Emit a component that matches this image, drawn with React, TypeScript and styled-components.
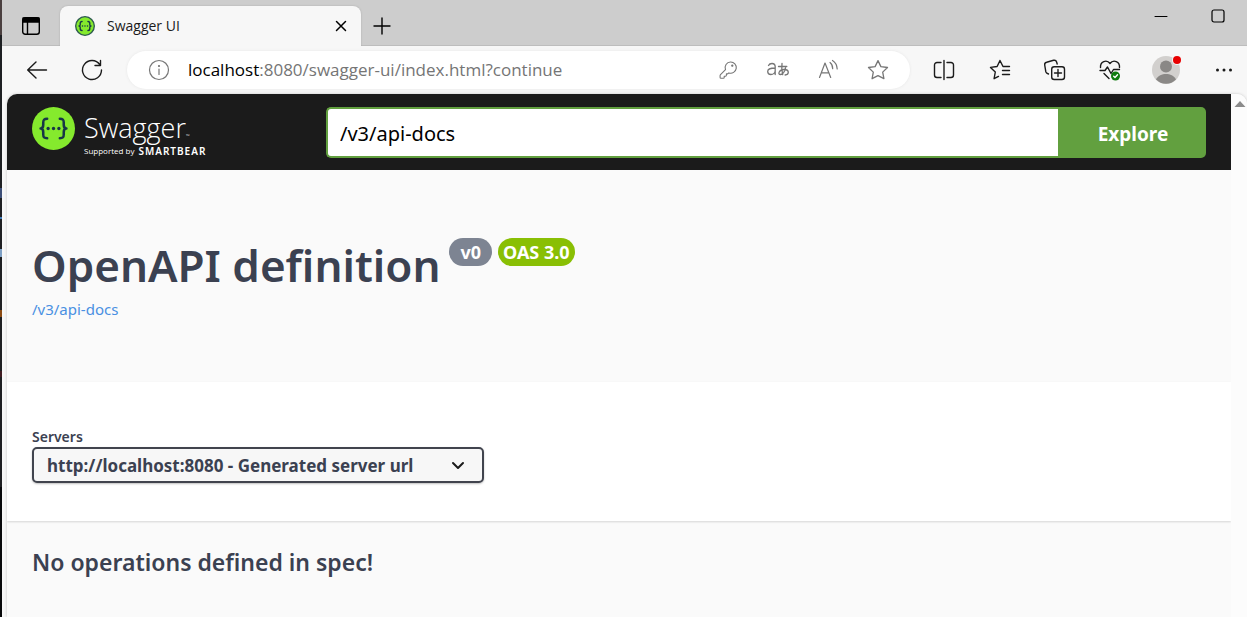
import React, { useState } from "react";
import styled, { createGlobalStyle } from "styled-components";

const GlobalStyle = createGlobalStyle`
  *, *::before, *::after { box-sizing: border-box; }
  body { margin: 0; background: #f7f7f7; }
  button, input, select { font: inherit; }
  svg { display: block; flex: none; }
`;

const chromeFont = `"Open Sans", "Noto Sans", "Noto Sans CJK JP", sans-serif`;
const pageFont = `"Noto Sans", "Open Sans", sans-serif`;

const Screen = styled.div`
  display: flex;
  min-height: 100vh;
`;

const EditorEdge = styled.div`
  flex: none;
  width: 2px;
  background: linear-gradient(
    #4a3f3f 0 35px,
    #1e2023 35px 188px,
    #3d4f78 188px 198px,
    #1e1f22 198px 217px,
    #3d7ab8 217px 219px,
    #1e1f22 219px 249px,
    #7d9fc4 249px 257px,
    #1e1f22 257px 310px,
    #8a4a12 310px 317px,
    #1e1f22 317px 371px,
    #401c22 371px 377px,
    #1e1f22 377px 487px,
    #08090b 487px
  );
`;

const Browser = styled.div`
  flex: 1;
  min-width: 0;
  display: flex;
  flex-direction: column;
  background: #f7f7f7;
  font-family: ${chromeFont};
`;

const TabStrip = styled.div`
  display: flex;
  align-items: flex-end;
  height: 46px;
  background: #cdcdcd;
  box-shadow: inset 0 -1px 0 #bdbdbd;
`;

const IconButton = styled.button<{ $width: number; $height?: number }>`
  flex: none;
  display: flex;
  align-items: center;
  justify-content: center;
  width: ${(p) => p.$width}px;
  height: ${(p) => p.$height ?? 40}px;
  padding: 0;
  border: 0;
  background: transparent;
  color: inherit;
`;

const Tab = styled.div`
  display: flex;
  align-items: center;
  width: 301px;
  height: 40px;
  padding: 0 4px 0 15px;
  border-radius: 8px 8px 0 0;
  background: #f7f7f7;
  box-shadow: 0 0 2px #a8a8a8;
  clip-path: inset(-3px -3px 0 -3px);
`;

const TabTitle = styled.span`
  flex: 1;
  margin-left: 12px;
  font-size: 14px;
  line-height: 20px;
  color: #1b1b1b;
`;

const WindowControls = styled.div`
  display: flex;
  align-self: flex-start;
  margin-left: auto;
`;

const Toolbar = styled.div`
  display: flex;
  align-items: center;
  height: 48px;
  padding: 0 0 0 7px;
  color: #1b1b1b;
`;

const ToolbarActions = styled.div`
  flex: none;
  display: flex;
  gap: 10px;
`;

const AddressBar = styled.div`
  flex: 1;
  min-width: 0;
  display: flex;
  align-items: center;
  height: 38px;
  margin: 0 11px 0 8px;
  padding: 0 7px;
  border-radius: 19px;
  background: #ffffff;
  box-shadow: 0 0 3px #e6e6e6;
  color: #767676;
`;

const Url = styled.span`
  flex: 1;
  min-width: 0;
  margin-left: 4px;
  overflow: hidden;
  white-space: nowrap;
  font-size: 17px;
  line-height: 24px;
  color: #757575;
`;

const Host = styled.span`
  color: #000000;
`;

const Viewport = styled.div`
  flex: 1;
  display: flex;
  margin-left: 5px;
  border-radius: 10px 10px 0 0;
  overflow: hidden;
  background: #fafafa;
  box-shadow: 0 0 3px #c4c4c4;
`;

const Scrollbar = styled.div`
  flex: none;
  width: 16px;
  padding: 6px 0 0 3px;
  background: #fcfcfc;
`;

const Page = styled.div`
  flex: 1;
  min-width: 0;
  background: #fafafa;
  color: #3b4151;
  font-family: ${pageFont};
`;

const TopBar = styled.header`
  display: flex;
  align-items: flex-start;
  height: 76px;
  padding: 13px 25px 0;
  background: #1b1b1b;
`;

const Brand = styled.a`
  flex: none;
  display: flex;
  align-items: flex-start;
  width: 294px;
  color: #ffffff;
  text-decoration: none;
  font-family: "Open Sans", sans-serif;
`;

const Wordmark = styled.span`
  display: flex;
  flex-direction: column;
  margin-left: 9px;
`;

const BrandName = styled.span`
  height: 36px;
  margin-top: 3px;
  font-size: 27px;
  font-weight: 300;
  line-height: 36px;
  white-space: nowrap;
`;

const Trademark = styled.small`
  font-size: 5px;
`;

const BrandNote = styled.span`
  display: flex;
  align-items: center;
  gap: 4px;
  font-size: 8px;
  line-height: 10px;
  white-space: nowrap;
`;

const Company = styled.b`
  font-family: "Noto Sans", sans-serif;
  font-size: 10px;
  font-weight: 600;
  letter-spacing: 1px;
`;

const SpecForm = styled.form`
  flex: 1;
  min-width: 0;
  display: flex;
  height: 51px;
`;

const SpecInput = styled.input`
  flex: 1;
  min-width: 0;
  padding: 2px 12px 0;
  border: 2px solid #62a03f;
  border-right: 0;
  border-radius: 5px 0 0 5px;
  background: #ffffff;
  color: #000000;
  font-size: 20px;
  outline: none;
`;

const ExploreButton = styled.button`
  width: 148px;
  padding: 3px 0 0 2px;
  border: 0;
  border-radius: 0 5px 5px 0;
  background: #62a03f;
  color: #ffffff;
  font-size: 19px;
  font-weight: 700;
`;

const Info = styled.section`
  height: 212px;
  padding: 66px 25px 0;
`;

const Heading = styled.div`
  display: flex;
  align-items: flex-start;
`;

const Title = styled.h1`
  margin: 0 3px 0 0;
  font-size: 44px;
  font-weight: 600;
  line-height: 58px;
`;

const Badge = styled.span<{ $color: string; $inset: number }>`
  height: 28px;
  margin: 2px 0 0 6px;
  padding: 0 ${(p) => p.$inset}px;
  border-radius: 14px;
  background: ${(p) => p.$color};
  color: #ffffff;
  font-size: 18px;
  font-weight: 700;
  line-height: 28px;
  white-space: nowrap;
`;

const SpecLink = styled.a`
  display: block;
  width: max-content;
  margin-top: 5px;
  color: #4990e2;
  font-size: 15px;
  line-height: 20px;
  text-decoration: none;
`;

const Servers = styled.section`
  height: 139px;
  padding: 45px 25px 0;
  background: #ffffff;
  box-shadow: 0 1px 2px rgba(0, 0, 0, 0.15);
`;

const ServersLabel = styled.label`
  display: block;
  font-size: 14px;
  font-weight: 600;
  line-height: 20px;
`;

const SelectBox = styled.div`
  display: grid;
  align-items: center;
  width: 452px;
  max-width: 100%;
  color: #1b1b1b;

  > * {
    grid-area: 1 / 1;
  }

  > svg {
    justify-self: end;
    margin-right: 18px;
    pointer-events: none;
  }
`;

const Select = styled.select`
  width: 100%;
  height: 36px;
  padding: 0 40px 0 13px;
  border: 2px solid #41444e;
  border-radius: 5px;
  appearance: none;
  background: #f7f7f7;
  box-shadow: 0 1px 2px rgba(0, 0, 0, 0.25);
  color: #3b4151;
  font-size: 17px;
  font-weight: 700;
`;

const EmptyNotice = styled.h3`
  margin: 0;
  padding: 25px;
  font-size: 23px;
  font-weight: 600;
  line-height: 32px;
`;

type IconProps = { size?: number; width?: number; children: React.ReactNode };

const Line = ({ size = 24, width = 1.4, children }: IconProps) => (
  <svg
    width={size}
    height={size}
    viewBox={`0 0 ${size} ${size}`}
    fill="none"
    stroke="currentColor"
    strokeWidth={width}
    strokeLinecap="round"
    strokeLinejoin="round"
    aria-hidden="true"
  >
    {children}
  </svg>
);

const SwaggerMark = ({ size, outlined }: { size: number; outlined?: boolean }) => (
  <svg width={size} height={size} viewBox="0 0 44 44" aria-hidden="true">
    <circle cx="22" cy="22" r={outlined ? 20.5 : 22} fill="#85ea2d" stroke={outlined ? "#2d5a50" : "none"} strokeWidth="3" />
    <g fill="none" stroke="#173647" strokeWidth={outlined ? 3 : 2.6} strokeLinecap="round" strokeLinejoin="round">
      <path d="M15.5 12c-3.500 0-4 1-4 4v2.500c0 2.200-.8 3.500-2.700 3.500 1.900 0 2.700 1.300 2.700 3.500V28c0 3 .5 4 4 4" />
      <path d="M28.500 12c3.500 0 4 1 4 4v2.500c0 2.200.8 3.500 2.700 3.500-1.900 0-2.700 1.300-2.700 3.500V28c0 3-.5 4-4 4" />
    </g>
    <g fill="#173647">
      <circle cx="16.500" cy="22" r="1.700" />
      <circle cx="22" cy="22" r="1.700" />
      <circle cx="27.500" cy="22" r="1.700" />
    </g>
  </svg>
);

const TabActionsIcon = () => (
  <Line>
    <rect x="3.700" y="3.700" width="16.600" height="16.600" rx="2.500" />
    <path d="M4 4h16v4H4z" fill="currentColor" />
    <path d="M8.500 8v12" />
  </Line>
);

const CloseIcon = () => (
  <Line size={12} width={1.5}>
    <path d="M1.500 1.500l9 9M10.500 1.500l-9 9" />
  </Line>
);

const PlusIcon = () => (
  <Line size={20}>
    <path d="M10 2v16M2 10h16" />
  </Line>
);

const MinimizeIcon = () => (
  <Line size={14} width={1}>
    <path d="M1 7.500h12" />
  </Line>
);

const MaximizeIcon = () => (
  <Line size={14} width={1.2}>
    <rect x="1" y="1" width="12" height="12" rx="2" />
  </Line>
);

const BackIcon = () => (
  <Line>
    <path d="M21.500 12H3M11 4l-8.300 8 8.300 8" />
  </Line>
);

const ReloadIcon = () => (
  <Line>
    <path d="M21.500 12A9.500 9.500 0 1 1 19.800 6.600M20.500 2.500v5h-5.500" />
  </Line>
);

const InfoIcon = () => (
  <Line width={1.2}>
    <circle cx="12" cy="12" r="9.500" />
    <path d="M12 11v5.500" />
    <circle cx="12" cy="8" r=".5" fill="currentColor" />
  </Line>
);

const KeyIcon = () => (
  <Line width={1.1}>
    <path d="M14.500 4a5.600 5.600 0 0 0-5 7.600l-5 5a1.500 1.500 0 0 0-.4 1v1.800c0 .5.400.900.900.900h2.300c.5 0 .9-.4.900-.9v-1.200h1.300c.5 0 .9-.4.900-.9v-1.400h1.300l1.200-1a5.600 5.600 0 1 0 1.600-10.900z" />
    <circle cx="16.300" cy="7.700" r=".6" fill="currentColor" />
  </Line>
);

const TranslateIcon = () => (
  <Line width={1.3}>
    <path d="M2.500 7.500c.7-1.400 2-2 3.500-2 2 0 3.200 1.100 3.200 3.200V16.500M9.200 10C5 10 1.700 10.700 1.700 13.500c0 1.800 1.300 3 3.200 3 2.300 0 4.300-1.700 4.300-4" />
    <path d="M12.500 8.500h8.300M16 5.500c-.5 4-.2 8 .7 11.200M19.500 10c-.7 3.500-2.900 6.500-5 6.500-3.400 0-1-5 3.300-5 2.700 0 4.500.8 4.500 2.700 0 1.700-1.300 2.600-3.200 2.800" />
  </Line>
);

const ReadAloudIcon = () => (
  <Line width={1.2}>
    <path d="M3.500 19.500L9 5l5.700 14.500M5.300 14.800h7.700M14 4.500c1.600 1.200 2.700 3.300 2.700 6.200M16.500 2.500c2.900 1.800 4.500 4.700 4.700 8.500" />
  </Line>
);

const StarIcon = () => (
  <Line width={1.3}>
    <path d="M12 2.600l2.900 6 6.600.9-4.800 4.600 1.200 6.600-5.900-3.100-5.900 3.100 1.200-6.600L2.500 9.500l6.600-.9z" />
  </Line>
);

const SplitIcon = () => (
  <Line>
    <path d="M9 4.500H5A2.500 2.500 0 0 0 2.500 7v10A2.500 2.500 0 0 0 5 19.500h4M15 4.500h4A2.500 2.500 0 0 1 21.500 7v10a2.500 2.500 0 0 1-2.500 2.500h-4M12 2.500v19" />
  </Line>
);

const FavoritesIcon = () => (
  <Line>
    <path d="M21.500 8.500h-6.500l-3-6-2.900 6-6.600.9 4.800 4.600-1.200 6.700 4.400-2.300M14.500 12.500h7M14.500 16.500h7" />
  </Line>
);

const CollectionsIcon = () => (
  <Line>
    <rect x="8.700" y="8.700" width="12.800" height="12.800" rx="2.500" />
    <path d="M15 11.500v7M11.500 15h7M5.500 16l-1.700-.8a2.500 2.500 0 0 1-1-1.500L1.700 7a2.500 2.500 0 0 1 1.900-2.800l7-1.900a2.500 2.500 0 0 1 3 1.700l.6 2" />
  </Line>
);

const EssentialsIcon = () => (
  <Line>
    <path d="M2.500 9.500C2 3.800 8.500.8 12 5.500c3.500-4.700 10-1.700 9.500 4M2 12.500h5l2.500-3.500 3.500 6.500 2.500-4h6M6 15.500l5 5" />
    <circle cx="17.500" cy="18" r="4.500" fill="#0f7b0f" stroke="none" />
    <path d="M15.700 18.200l1.300 1.200 2.500-2.600" stroke="#ffffff" />
  </Line>
);

const AvatarIcon = () => (
  <svg width="30" height="32" viewBox="0 0 30 32" aria-hidden="true">
    <circle cx="14" cy="16" r="14" fill="#d2d0ce" />
    <circle cx="14" cy="12.500" r="6" fill="#8a8886" />
    <path d="M4 25.500c2-4 6-5.500 10-5.500s8 1.500 10 5.500a14 14 0 0 1-20 0z" fill="#8a8886" />
    <circle cx="25" cy="6" r="5" fill="#f7f7f7" />
    <circle cx="25" cy="6" r="4" fill="#e80000" />
  </svg>
);

const MoreIcon = () => (
  <svg width="18" height="4" viewBox="0 0 18 4" fill="currentColor" aria-hidden="true">
    <circle cx="2.500" cy="2" r="1.500" />
    <circle cx="9" cy="2" r="1.500" />
    <circle cx="15.500" cy="2" r="1.500" />
  </svg>
);

const ChevronIcon = () => (
  <Line size={16} width={2}>
    <path d="M3 6l5 5 5-5" />
  </Line>
);

export default function App() {
  const [spec, setSpec] = useState("/v3/api-docs");

  return (
    <Screen>
      <GlobalStyle />
      <EditorEdge aria-hidden="true" />
      <Browser>
        <TabStrip>
          <IconButton $width={58} aria-label="Tab actions"><TabActionsIcon /></IconButton>
          <Tab>
            <SwaggerMark size={20} outlined />
            <TabTitle>Swagger UI</TabTitle>
            <IconButton $width={32} aria-label="Close tab"><CloseIcon /></IconButton>
          </Tab>
          <IconButton $width={42} aria-label="New tab"><PlusIcon /></IconButton>
          <WindowControls>
            <IconButton $width={57} $height={32} aria-label="Minimize"><MinimizeIcon /></IconButton>
            <IconButton $width={58} $height={32} aria-label="Maximize"><MaximizeIcon /></IconButton>
          </WindowControls>
        </TabStrip>
        <Toolbar>
          <IconButton $width={56} aria-label="Back"><BackIcon /></IconButton>
          <IconButton $width={54} aria-label="Refresh"><ReloadIcon /></IconButton>
          <AddressBar>
            <IconButton $width={50} aria-label="Site information"><InfoIcon /></IconButton>
            <Url><Host>localhost</Host>:8080/swagger-ui/index.html?continue</Url>
            <IconButton $width={50} aria-label="Saved passwords"><KeyIcon /></IconButton>
            <IconButton $width={50} aria-label="Translate"><TranslateIcon /></IconButton>
            <IconButton $width={50} aria-label="Read aloud"><ReadAloudIcon /></IconButton>
            <IconButton $width={50} aria-label="Add to favorites"><StarIcon /></IconButton>
          </AddressBar>
          <ToolbarActions>
            <IconButton $width={46} aria-label="Split screen"><SplitIcon /></IconButton>
            <IconButton $width={46} aria-label="Favorites"><FavoritesIcon /></IconButton>
            <IconButton $width={44} aria-label="Collections"><CollectionsIcon /></IconButton>
            <IconButton $width={46} aria-label="Browser essentials"><EssentialsIcon /></IconButton>
            <IconButton $width={48} aria-label="Profile"><AvatarIcon /></IconButton>
            <IconButton $width={46} aria-label="Settings and more"><MoreIcon /></IconButton>
          </ToolbarActions>
        </Toolbar>
        <Viewport>
          <Page>
            <TopBar>
              <Brand href="#">
                <SwaggerMark size={43} />
                <Wordmark>
                  <BrandName>Swagger<Trademark>™</Trademark></BrandName>
                  <BrandNote>Supported by <Company>SMARTBEAR</Company></BrandNote>
                </Wordmark>
              </Brand>
              <SpecForm onSubmit={(e) => e.preventDefault()}>
                <SpecInput
                  type="text"
                  aria-label="Definition URL"
                  value={spec}
                  onChange={(e) => setSpec(e.target.value)}
                />
                <ExploreButton type="submit">Explore</ExploreButton>
              </SpecForm>
            </TopBar>
            <main>
              <Info>
                <Heading>
                  <Title>OpenAPI definition</Title>
                  <Badge $color="#7d8492" $inset={11}>v0</Badge>
                  <Badge $color="#89bf04" $inset={5}>OAS 3.0</Badge>
                </Heading>
                <SpecLink href="/v3/api-docs">/v3/api-docs</SpecLink>
              </Info>
              <Servers>
                <ServersLabel htmlFor="servers">Servers</ServersLabel>
                <SelectBox>
                  <Select id="servers">
                    <option>http://localhost:8080 - Generated server url</option>
                  </Select>
                  <ChevronIcon />
                </SelectBox>
              </Servers>
              <EmptyNotice>No operations defined in spec!</EmptyNotice>
            </main>
          </Page>
          <Scrollbar aria-hidden="true">
            <svg width="12" height="8" viewBox="0 0 12 8">
              <path d="M6 1l5.500 6H.5z" fill="#8b8b8b" />
            </svg>
          </Scrollbar>
        </Viewport>
      </Browser>
    </Screen>
  );
}
